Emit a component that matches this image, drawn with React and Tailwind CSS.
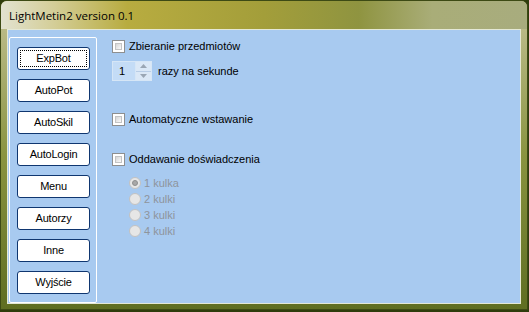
import React from "react";

const buttons = ["ExpBot", "AutoPot", "AutoSkil", "AutoLogin", "Menu", "Autorzy", "Inne", "Wyjście"];

function CheckBox({ label }) {
  return (
    <div className="flex items-center h-[13px]">
      <div className="w-[13px] h-[13px] border border-[#8e8f8f] bg-white p-[2px]">
        <div className="w-full h-full border border-[#c4c4c4] bg-gradient-to-br from-[#d6d6d6] to-[#fbfbfb]" />
      </div>
      <span className="ml-[4px] text-[11px] leading-[13px] text-black">{label}</span>
    </div>
  );
}

function Radio({ label, checked }) {
  return (
    <div className="flex items-center h-[16px]">
      <div className="w-[12px] h-[12px] rounded-full border border-[#c2c2c2] bg-[#e6e6e6] flex items-center justify-center">
        {checked && <div className="w-[6px] h-[6px] rounded-full bg-[#a8a8a8] border border-[#8f8f8f]" />}
      </div>
      <span className="ml-[3px] text-[11px] leading-[13px] text-[#8e949c]">{label}</span>
    </div>
  );
}

function Spinner() {
  return (
    <div className="flex items-center h-[20px]">
      <div className="flex w-[40px] h-[20px] border border-[#d6e6f6] bg-[#c4dcf6]">
        <div className="flex-1 text-[11px] leading-[18px] pl-[6px] text-black">1</div>
        <div className="w-[16px] flex flex-col border-l border-[#d6e6f6]">
          <div className="flex-1 flex items-center justify-center border-b border-[#b8cde6] bg-[#dbe8f6]">
            <svg width="7" height="4" viewBox="0 0 7 4"><path d="M0 4L3.5 0L7 4Z" fill="#9aa6b4" /></svg>
          </div>
          <div className="flex-1 flex items-center justify-center bg-[#dbe8f6]">
            <svg width="7" height="4" viewBox="0 0 7 4"><path d="M0 0L3.5 4L7 0Z" fill="#9aa6b4" /></svg>
          </div>
        </div>
      </div>
      <span className="ml-[6px] text-[11px] text-black">razy na sekunde</span>
    </div>
  );
}

export default function App() {
  return (
    <div className="w-[529px] h-[312px] bg-[#2f3d0c] overflow-hidden" style={{ fontFamily: '"Liberation Sans", Arial, sans-serif' }}>
      <div className="w-[528px] h-[310px] rounded-t-[7px] border border-[#3d4a14] flex flex-col px-[6px] bg-gradient-to-b from-[#c4c294] via-[#8a9440] to-[#5f6e22]">
        <div
          className="h-[28px] -mx-[6px] px-[8px] flex items-center rounded-t-[6px] bg-[linear-gradient(90deg,#e2e2d0_0%,#d4ce98_10%,#b8ac40_24%,#a39e3a_50%,#8f9440_68%,#a9ad78_82%,#a8ac7e_100%)]"
        >
          <span className="text-[11.5px] text-black pt-[1px]" style={{ fontFamily: '"Open Sans", "Noto Sans", sans-serif' }}>
            LightMetin2 version 0.1
          </span>
        </div>
        <div className="h-[275px] border border-[#e4e8d6] bg-[#a8caf0] flex">
          <div className="ml-[1px] mt-[7px] w-[88px] h-[266px] border border-white rounded-[2px] pt-[9px] pl-[7px] flex flex-col gap-[9px]">
            {buttons.map((b, i) => (
              <div
                key={b}
                className="w-[73px] h-[23px] bg-white border border-[#0f3670] rounded-[3px] flex items-center justify-center p-[2px]"
              >
                <div className={`w-full h-full flex items-center justify-center text-[11px] tracking-[-0.2px] text-black ${i === 0 ? "border border-dotted border-black" : ""}`}>
                  {b}
                </div>
              </div>
            ))}
          </div>
          <div className="ml-[15px] pt-[10px] flex flex-col">
            <CheckBox label="Zbieranie przedmiotów" />
            <div className="mt-[8px]">
              <Spinner />
            </div>
            <div className="mt-[32px]">
              <CheckBox label="Automatyczne wstawanie" />
            </div>
            <div className="mt-[27px]">
              <CheckBox label="Oddawanie doświadczenia" />
            </div>
            <div className="mt-[9px] ml-[17px] flex flex-col">
              <Radio label="1 kulka" checked />
              <Radio label="2 kulki" />
              <Radio label="3 kulki" />
              <Radio label="4 kulki" />
            </div>
          </div>
        </div>
      </div>
    </div>
  );
}
